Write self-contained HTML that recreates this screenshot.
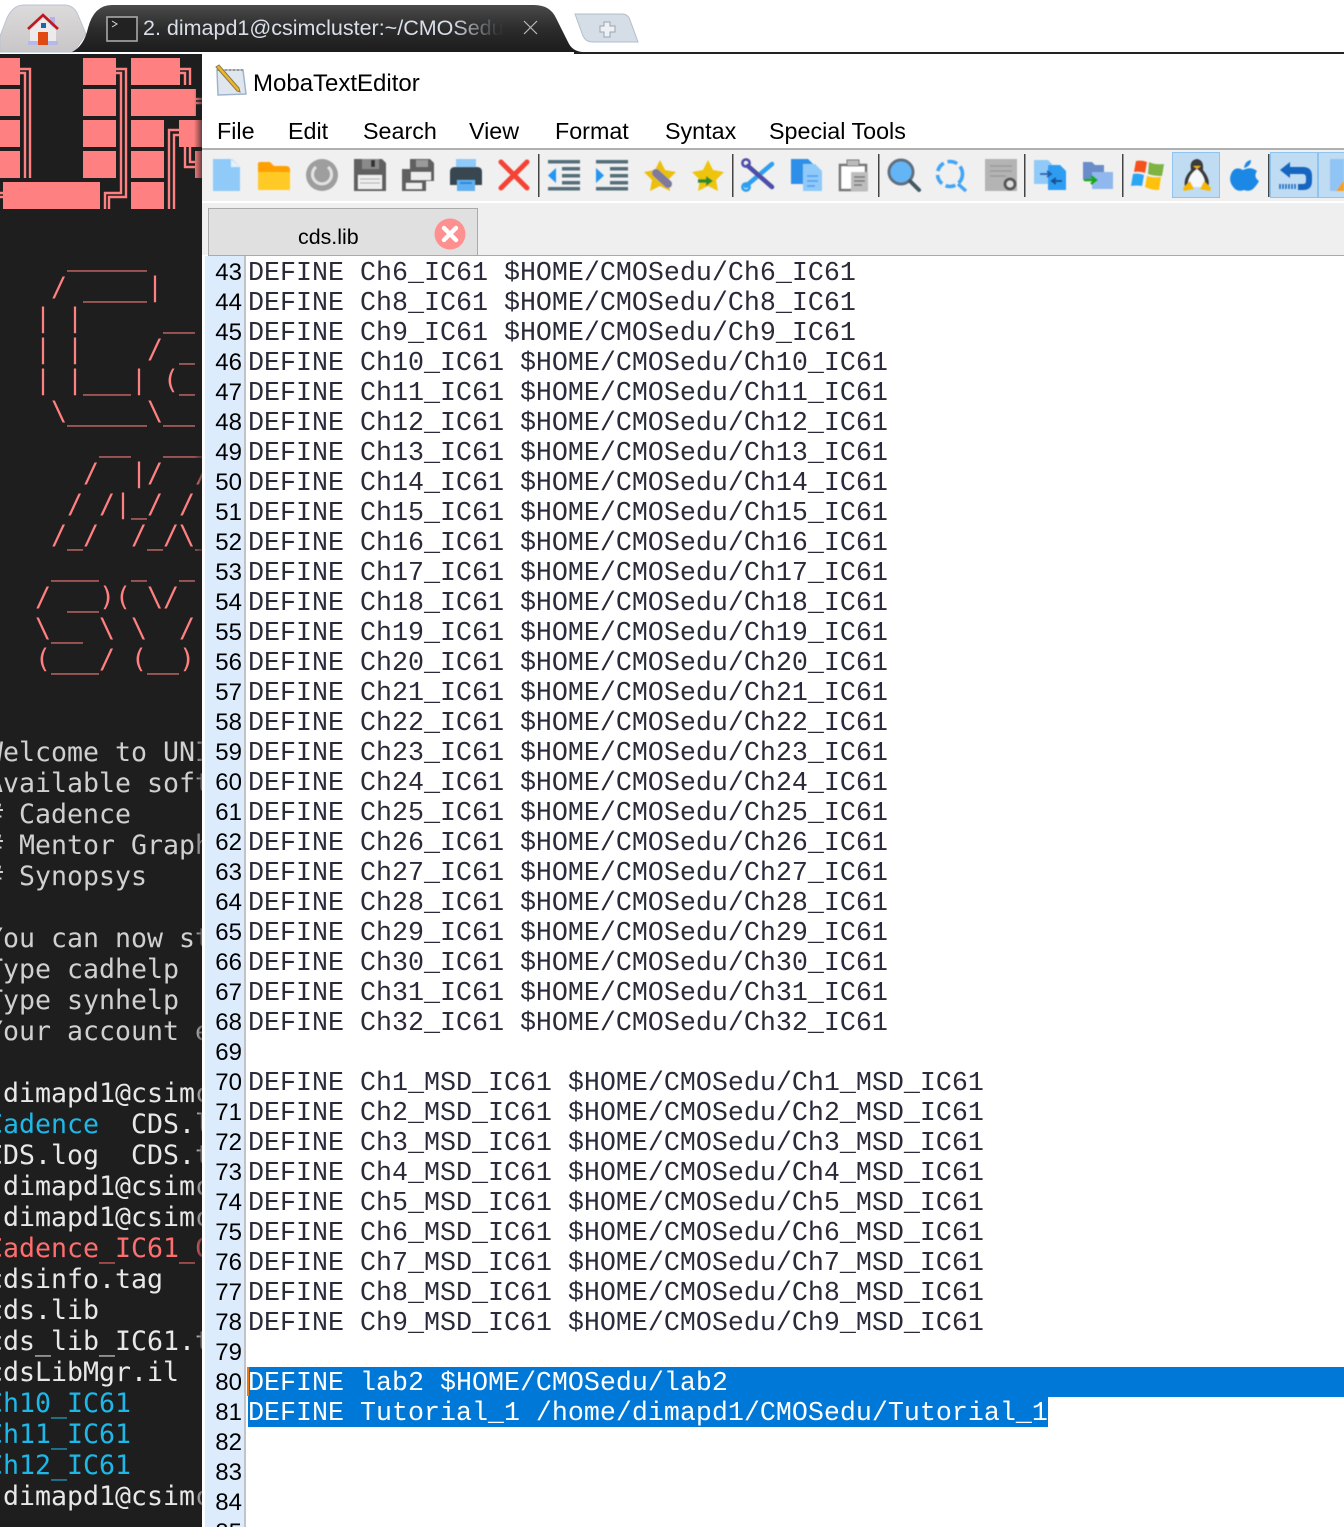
<!DOCTYPE html>
<html><head><meta charset="utf-8"><style>
html,body{margin:0;padding:0;background:#fff}
#p{position:relative;width:1344px;height:1527px;overflow:hidden;background:#fff;font-family:"Liberation Sans",sans-serif}
.a{position:absolute}
#term{left:0;top:54px;width:202px;height:1473px;background:#1e1e1e}
pre{margin:0}
#tt{left:-13px;top:241px;font:26.58px/31px "DejaVu Sans Mono",monospace;color:#d0d0d0;white-space:pre}
.r{color:#ff8080}.c{color:#1eb8e8}.w{color:#e8e8e8}.e{color:#ff6e6e}
#win{left:202px;top:54px;width:1142px;height:1473px;background:#fff}
.m{position:absolute;top:116px;font-size:23.3px;line-height:30px;color:#000;white-space:pre}
#nums{left:205px;top:258px;width:37px;text-align:right;font:24px/30px "Liberation Sans",sans-serif;color:#000;white-space:pre}
#code{left:248px;top:259px;font:26.67px/30px "Liberation Mono",monospace;color:#2a2a3a;white-space:pre}
#sel{left:248px;top:1369px;font:26.67px/30px "Liberation Mono",monospace;color:#fff;white-space:pre}
</style></head><body><div id="p">

<svg class="a" style="left:0;top:0" width="1344" height="56">
<defs>
<linearGradient id="g1" x1="0" y1="0" x2="0" y2="1"><stop offset="0" stop-color="#4a4a4a"/><stop offset=".5" stop-color="#2c2c2c"/><stop offset="1" stop-color="#1c1c1c"/></linearGradient>
<linearGradient id="g2" x1="0" y1="0" x2="0" y2="1"><stop offset="0" stop-color="#dcdada"/><stop offset="1" stop-color="#c8c6c6"/></linearGradient>
</defs>
<path d="M0 36 L7 18 Q13 5 24 5 L64 5 Q74 5 78 15 L86 34 L74 52 L0 52Z" fill="url(#g2)" stroke="#b8c4d4" stroke-width="1"/>
<path d="M72 52 Q84 46 88 28 Q94 5 112 5 L534 5 Q550 5 556 18 L568 42 Q572 51 582 52Z" fill="url(#g1)"/>
<path d="M575 14 L622 14 Q628 14 630 20 L638 42 L592 42 Q586 42 583 36Z" fill="#d5dde6" stroke="#b2bfcc"/>
<path d="M604 22h6v4h5v6h-5v5h-6v-5h-4v-6h4z" fill="#eef1f4" stroke="#9aa4ae"/>
<rect x="574" y="52" width="770" height="2" fill="#222"/>
<!-- home -->
<rect x="50" y="17" width="5" height="10" fill="#b0b4e8"/>
<path d="M30 30 L43 18 L56 30 V44 H30Z" fill="#eceaea"/>
<rect x="28" y="41" width="30" height="4" fill="#b4b8ea"/>
<path d="M28 29 L43 15 L58 29" fill="none" stroke="#c0161c" stroke-width="2.6"/>
<rect x="41" y="23" width="5" height="5" fill="#1a66a8"/>
<rect x="38" y="32" width="10" height="13" fill="#e04a12"/>
<!-- term icon -->
<rect x="107" y="17" width="30" height="24" fill="#222" stroke="#a8a8a8" stroke-width="1.6"/>
<path d="M112 21 l5 3 -5 3" fill="none" stroke="#ddd" stroke-width="1"/>
<path d="M524 21 L537 34 M537 21 L524 34" stroke="#bbb" stroke-width="1.2"/>
</svg>
<div class="a" style="left:143px;top:15px;width:360px;overflow:hidden;font-size:21.5px;line-height:26px;color:#d8dfe8;white-space:pre;-webkit-mask-image:linear-gradient(90deg,#000 310px,rgba(0,0,0,.05) 355px)">2. dimapd1@csimcluster:~/CMOSedu</div>

<div id="term" class="a"></div>
<pre id="tt" class="a"><span class="r">     _____
    / ____|
   | |     __
   | |    / _
   | |___| (_
    \_____\__
       __  ___
      /  |/  /
     / /|_/ / /
    /_/  /_/\_
    ___  _  _
   / __)( \/
   \__ \ \  /
   (___/ (__)</span>


Welcome to UNIX
Available software
# Cadence
# Mentor Graphics
# Synopsys

You can now start
Type cadhelp
Type synhelp
Your account e

<span class="w">[dimapd1@csimc</span>
<span class="c">Cadence</span><span class="w">  CDS.l</span>
<span class="w">CDS.log  CDS.t</span>
<span class="w">[dimapd1@csimc
[dimapd1@csimc</span>
<span class="e">Cadence_IC61_C</span>
<span class="w">cdsinfo.tag
cds.lib
cds_lib_IC61.t
cdsLibMgr.il</span>
<span class="c">Ch10_IC61
Ch11_IC61
Ch12_IC61</span>
<span class="w">[dimapd1@csimc</span></pre>

<svg class="a" style="left:0;top:54px" width="202" height="160" viewBox="0 54 202 160">
<g fill="#ff8080">
<rect x="0" y="58" width="20" height="27"/><rect x="0" y="89" width="20" height="27"/><rect x="0" y="120" width="20" height="27"/><rect x="0" y="151" width="20" height="27"/>
<rect x="83" y="58" width="33" height="27"/><rect x="83" y="89" width="33" height="27"/><rect x="83" y="120" width="33" height="27"/><rect x="83" y="151" width="33" height="27"/>
<rect x="131" y="58" width="49" height="27"/><rect x="131" y="89" width="65" height="27"/><rect x="131" y="120" width="33" height="27"/><rect x="179" y="120" width="23" height="27"/>
<rect x="131" y="151" width="33" height="27"/><rect x="195" y="151" width="7" height="27"/>
<rect x="3" y="182" width="97" height="27"/><rect x="131" y="182" width="33" height="27"/>
</g>
<g fill="none" stroke="#ff8080" stroke-width="2.4">
<path d="M20 69H30V178M20 73H25V178"/>
<path d="M116 69H126V197H109V209M116 73H121V193H105V209"/>
<path d="M180 69H190V85M180 73H185V85"/>
<path d="M196 99H202M196 103H202"/>
<path d="M179 130H169V209M179 135H174V209"/>
<path d="M185 147V167H195M190 147V162H195"/>
<path d="M0 193H3M0 197H3"/>
</g>
</svg>
<div class="a" style="left:194px;top:54px;width:8px;height:1473px;background:linear-gradient(90deg,rgba(30,30,30,0),rgba(30,30,30,.65))"></div>

<div id="win" class="a"></div>
<svg class="a" style="left:213px;top:64px" width="36" height="36">
<path d="M4 6 L30 6 L33 30 L5 31Z" fill="#dfe6ee" stroke="#9fb4cc" stroke-width="1.5"/>
<path d="M4 6 L30 6" stroke="#999" stroke-width="2" stroke-dasharray="2 2"/>
<path d="M3 3 L24 27 L27 28 L26 24 L6 1Z" fill="#eab72e" stroke="#8a7a4a" stroke-width="1"/>
</svg>
<div class="a" style="left:253px;top:69px;font-size:24px;line-height:30px;color:#000;white-space:pre">MobaTextEditor</div>
<div class="m" style="left:217px">File</div>
<div class="m" style="left:288px">Edit</div>
<div class="m" style="left:363px">Search</div>
<div class="m" style="left:469px">View</div>
<div class="m" style="left:555px">Format</div>
<div class="m" style="left:665px">Syntax</div>
<div class="m" style="left:769px">Special Tools</div>

<div class="a" style="left:202px;top:148px;width:1142px;height:2px;background:#b0b0b0"></div>
<div class="a" style="left:202px;top:150px;width:1142px;height:51px;background:#f0f0f0"></div>
<div class="a" style="left:202px;top:201px;width:1142px;height:2px;background:#fff"></div>
<div class="a" style="left:202px;top:203px;width:1142px;height:52px;background:#efefef"></div>
<div class="a" style="left:208px;top:208px;width:268px;height:47px;background:#e0e0e0;border:1px solid #aaa;border-bottom:0"></div>
<div class="a" style="left:208px;top:255px;width:1136px;height:1px;background:#aaa"></div>
<div class="a" style="left:298px;top:223px;font-size:21.4px;line-height:28px;color:#000;white-space:pre">cds.lib</div>
<svg class="a" style="left:432px;top:217px" width="36" height="36">
<circle cx="18" cy="17" r="15.5" fill="#ff9090"/>
<path d="M12 11 L24 23 M24 11 L12 23" stroke="#fff" stroke-width="4.4" stroke-linecap="round"/>
</svg>

<svg class="a" style="left:202px;top:150px" width="1142" height="52" viewBox="202 150 1142 52">
<defs><filter id="b" x="-5%" y="-20%" width="110%" height="140%"><feGaussianBlur stdDeviation="0.6"/></filter></defs>
<rect x="1172.5" y="152.5" width="47" height="45" fill="#c0dcf3" stroke="#90c4f0"/>
<rect x="1270.5" y="152.5" width="47" height="45" fill="#c0dcf3" stroke="#90c4f0"/>
<rect x="1318.5" y="152.5" width="30" height="45" fill="#c0dcf3" stroke="#90c4f0"/>
<g fill="#444"><rect x="538" y="154" width="1.5" height="43"/><rect x="732" y="154" width="1.5" height="43"/><rect x="878" y="154" width="1.5" height="43"/><rect x="1024" y="154" width="1.5" height="43"/><rect x="1122" y="154" width="1.5" height="43"/><rect x="1268" y="154" width="1.5" height="43"/></g>
<g filter="url(#b)">
<path d="M213 159H232L240 167V191H213Z" fill="#90caf9"/><path d="M231 159L240 167H231Z" fill="#e3f2fd"/>
<path d="M258 164Q258 162 260 162H270L274 166H286Q290 166 290 170V188Q290 190 288 190H260Q258 190 258 188Z" fill="#ffa000"/>
<path d="M258 172H290V188Q290 190 288 190H260Q258 190 258 188Z" fill="#ffca28"/>
<circle cx="322" cy="175" r="16" fill="#9e9e9e"/><path d="M316 167A9.5 9.5 0 1 0 328 167" fill="none" stroke="#e2e2e2" stroke-width="3"/>
<path d="M354 159H382L386 163V191H354Z" fill="#616161"/><rect x="362" y="159" width="17" height="10" fill="#8a8a8a"/><rect x="371" y="160" width="4" height="7" fill="#333"/>
<rect x="358" y="175" width="24" height="14" fill="#eee"/><path d="M360 179H380M360 183H380" stroke="#aaa"/>
<path d="M402 169H410V159H430L434 163V181H426V191H402Z" fill="#616161"/><rect x="406" y="183" width="16" height="6" fill="#eee"/><rect x="411" y="172" width="20" height="8" fill="#eee"/><rect x="416" y="160" width="12" height="7" fill="#9a9a9a"/>
<path d="M456 159H476V168H456Z" fill="#90caf9"/><path d="M450 172Q450 167 455 167H477Q482 167 482 172V185H450Z" fill="#37474f"/><path d="M457 180H475V191H457Z" fill="#64b0ee"/><rect x="460" y="182" width="12" height="2" fill="#1e88e5"/>
<path d="M501 162L527 188M527 162L501 188" stroke="#f44336" stroke-width="5" stroke-linecap="round"/>
<g fill="#546e7a"><rect x="548" y="160" width="32" height="3.5"/><rect x="562" y="167" width="18" height="3.5"/><rect x="562" y="174" width="18" height="3.5"/><rect x="562" y="181" width="18" height="3.5"/><rect x="548" y="187" width="32" height="3.5"/>
<rect x="596" y="160" width="32" height="3.5"/><rect x="610" y="167" width="18" height="3.5"/><rect x="610" y="174" width="18" height="3.5"/><rect x="610" y="181" width="18" height="3.5"/><rect x="596" y="187" width="32" height="3.5"/></g>
<path d="M556 168V183L548 175.5Z" fill="#2196f3"/><path d="M596 168V183L604 175.5Z" fill="#2196f3"/>
<path d="M660 160L665 170L676 172L668 180L670 191L660 186L650 191L652 180L644 172L655 170Z" fill="#eabf10"/>
<path d="M656 173L668 184" stroke="#7d7a9e" stroke-width="8" stroke-linecap="round"/>
<path d="M708 160L713 170L724 172L716 180L718 191L708 186L698 191L700 180L692 172L703 170Z" fill="#eec408"/>
<path d="M698 181H708" stroke="#2c8a2c" stroke-width="3.5"/><path d="M706 176L713 181L706 186Z" fill="#2c8a2c"/>
<path d="M746 186L772 164" stroke="#2f9ff0" stroke-width="4.5" stroke-linecap="round"/><path d="M748 166L772 187" stroke="#4d4da8" stroke-width="4.5" stroke-linecap="round"/>
<circle cx="746" cy="163" r="3.6" fill="none" stroke="#4d4da8" stroke-width="2.6"/><circle cx="746" cy="187" r="3.6" fill="none" stroke="#2f9ff0" stroke-width="2.6"/>
<path d="M791 159H808L813 164V184H791Z" fill="#2f8fe8"/><path d="M803 164H815L822 171V191H803Z" fill="#90caf9"/><path d="M807 176H818M807 181H818M807 186H815" stroke="#4a9cec" stroke-width="1.5"/>
<path d="M840 165H866V190H840Z" fill="#fff" stroke="#757575" stroke-width="2.5"/><rect x="847" y="160" width="12" height="6" fill="#bbb" stroke="#757575"/><path d="M851 172H868V191H851Z" fill="#bdbdbd"/><path d="M854 177H865M854 181H865M854 185H862" stroke="#777" stroke-width="1.4"/>
<circle cx="901" cy="172" r="12" fill="#64b5f6" stroke="#607080" stroke-width="3"/><path d="M910 181L919 190" stroke="#455a64" stroke-width="4" stroke-linecap="round"/>
<circle cx="950" cy="174" r="12.5" fill="none" stroke="#42a5f5" stroke-width="3.6" stroke-dasharray="10 4"/><path d="M958 184L966 191" stroke="#42a5f5" stroke-width="3.4"/>
<rect x="985" y="159" width="32" height="32" fill="#b4b4b4"/><path d="M990 166H1012M990 171H1012M990 176H1006" stroke="#999" stroke-width="1.5"/><circle cx="1010" cy="184" r="5" fill="#ddd" stroke="#555" stroke-width="3"/>
<path d="M1034 160H1048L1052 164V184H1034Z" fill="#90caf9"/><path d="M1048 165H1060L1066 171V190H1048Z" fill="#2f9cf0"/><path d="M1040 174H1050M1047 171l4 3-4 3" stroke="#1e5fb0" stroke-width="2" fill="none"/><path d="M1052 181H1062M1056 178l-4 3 4 3" stroke="#144f90" stroke-width="2" fill="none"/>
<path d="M1083 162H1092L1095 165H1104V180H1083Z" fill="#6a8cc8"/><rect x="1092" y="172" width="21" height="17" fill="#90b8ee"/><path d="M1084 180H1094M1091 176l5 4-5 4" stroke="#18a818" stroke-width="2.6" fill="none"/>
<path d="M1136 161Q1142 160 1147 162L1145 173Q1140 171 1134 172Z" fill="#f4511e"/><path d="M1149 162Q1155 165 1164 164L1162 176Q1154 176 1148 174Z" fill="#7cb342"/><path d="M1133 174Q1139 173 1144 175L1142 186Q1137 185 1131 186Z" fill="#29a6f5"/><path d="M1147 176Q1153 178 1161 177L1159 190Q1151 190 1145 187Z" fill="#ffc107"/>
<path d="M1197 159Q1204 160 1203 170Q1211 180 1208 187H1185Q1183 178 1191 170Q1189 160 1197 159Z" fill="#3a3a3a"/><path d="M1197 169Q1206 176 1205 187H1188Q1187 176 1197 169Z" fill="#f6f9fc"/><path d="M1193 166L1201 166L1197 169Z" fill="#f0b000"/><path d="M1183 188L1190 181L1194 189L1184 191Z" fill="#f5b800"/><path d="M1211 188L1204 181L1200 189L1210 191Z" fill="#f5b800"/>
<path d="M1243 170Q1236 166 1232 172Q1227 181 1235 189Q1239 192 1244 190Q1249 192 1253 189Q1257 185 1259 181Q1253 177 1257 171Q1251 166 1243 170Z" fill="#1e88e5"/><path d="M1244 168Q1245 161 1251 160Q1251 166 1244 168Z" fill="#1e88e5"/>
<path d="M1290 162L1280 170L1290 178V174H1303Q1306 174 1306 178V181Q1306 184 1303 184H1298V190H1303Q1312 190 1312 181V176Q1312 167 1303 167H1290Z" fill="#1565c0"/><path d="M1280 184V189M1283 184V189M1286 184V189M1289 184V189M1292 184V189M1295 184V189" stroke="#1565c0" stroke-width="1.5"/>
<path d="M1330 159H1344V191H1330Z" fill="#90c4f4"/><path d="M1336 191L1344 180V191Z" fill="#f0a020"/>
</g>
</svg>

<div class="a" style="left:205px;top:256px;width:39px;height:1271px;background:#dcecfd"></div>
<div class="a" style="left:244px;top:256px;width:1.5px;height:1271px;background:#c0c4c8"></div>
<div class="a" style="left:248px;top:1367px;width:1096px;height:30px;background:#0078d7"></div>
<div class="a" style="left:248px;top:1397px;width:800px;height:30px;background:#0078d7"></div>
<div class="a" style="left:247px;top:1367px;width:2px;height:29px;background:#e87a10"></div>

<pre id="nums" class="a">43
44
45
46
47
48
49
50
51
52
53
54
55
56
57
58
59
60
61
62
63
64
65
66
67
68
69
70
71
72
73
74
75
76
77
78
79
80
81
82
83
84
85</pre>
<pre id="code" class="a">DEFINE Ch6_IC61 $HOME/CMOSedu/Ch6_IC61
DEFINE Ch8_IC61 $HOME/CMOSedu/Ch8_IC61
DEFINE Ch9_IC61 $HOME/CMOSedu/Ch9_IC61
DEFINE Ch10_IC61 $HOME/CMOSedu/Ch10_IC61
DEFINE Ch11_IC61 $HOME/CMOSedu/Ch11_IC61
DEFINE Ch12_IC61 $HOME/CMOSedu/Ch12_IC61
DEFINE Ch13_IC61 $HOME/CMOSedu/Ch13_IC61
DEFINE Ch14_IC61 $HOME/CMOSedu/Ch14_IC61
DEFINE Ch15_IC61 $HOME/CMOSedu/Ch15_IC61
DEFINE Ch16_IC61 $HOME/CMOSedu/Ch16_IC61
DEFINE Ch17_IC61 $HOME/CMOSedu/Ch17_IC61
DEFINE Ch18_IC61 $HOME/CMOSedu/Ch18_IC61
DEFINE Ch19_IC61 $HOME/CMOSedu/Ch19_IC61
DEFINE Ch20_IC61 $HOME/CMOSedu/Ch20_IC61
DEFINE Ch21_IC61 $HOME/CMOSedu/Ch21_IC61
DEFINE Ch22_IC61 $HOME/CMOSedu/Ch22_IC61
DEFINE Ch23_IC61 $HOME/CMOSedu/Ch23_IC61
DEFINE Ch24_IC61 $HOME/CMOSedu/Ch24_IC61
DEFINE Ch25_IC61 $HOME/CMOSedu/Ch25_IC61
DEFINE Ch26_IC61 $HOME/CMOSedu/Ch26_IC61
DEFINE Ch27_IC61 $HOME/CMOSedu/Ch27_IC61
DEFINE Ch28_IC61 $HOME/CMOSedu/Ch28_IC61
DEFINE Ch29_IC61 $HOME/CMOSedu/Ch29_IC61
DEFINE Ch30_IC61 $HOME/CMOSedu/Ch30_IC61
DEFINE Ch31_IC61 $HOME/CMOSedu/Ch31_IC61
DEFINE Ch32_IC61 $HOME/CMOSedu/Ch32_IC61

DEFINE Ch1_MSD_IC61 $HOME/CMOSedu/Ch1_MSD_IC61
DEFINE Ch2_MSD_IC61 $HOME/CMOSedu/Ch2_MSD_IC61
DEFINE Ch3_MSD_IC61 $HOME/CMOSedu/Ch3_MSD_IC61
DEFINE Ch4_MSD_IC61 $HOME/CMOSedu/Ch4_MSD_IC61
DEFINE Ch5_MSD_IC61 $HOME/CMOSedu/Ch5_MSD_IC61
DEFINE Ch6_MSD_IC61 $HOME/CMOSedu/Ch6_MSD_IC61
DEFINE Ch7_MSD_IC61 $HOME/CMOSedu/Ch7_MSD_IC61
DEFINE Ch8_MSD_IC61 $HOME/CMOSedu/Ch8_MSD_IC61
DEFINE Ch9_MSD_IC61 $HOME/CMOSedu/Ch9_MSD_IC61</pre>
<pre id="sel" class="a">DEFINE lab2 $HOME/CMOSedu/lab2
DEFINE Tutorial_1 /home/dimapd1/CMOSedu/Tutorial_1</pre>
</div></body></html>
